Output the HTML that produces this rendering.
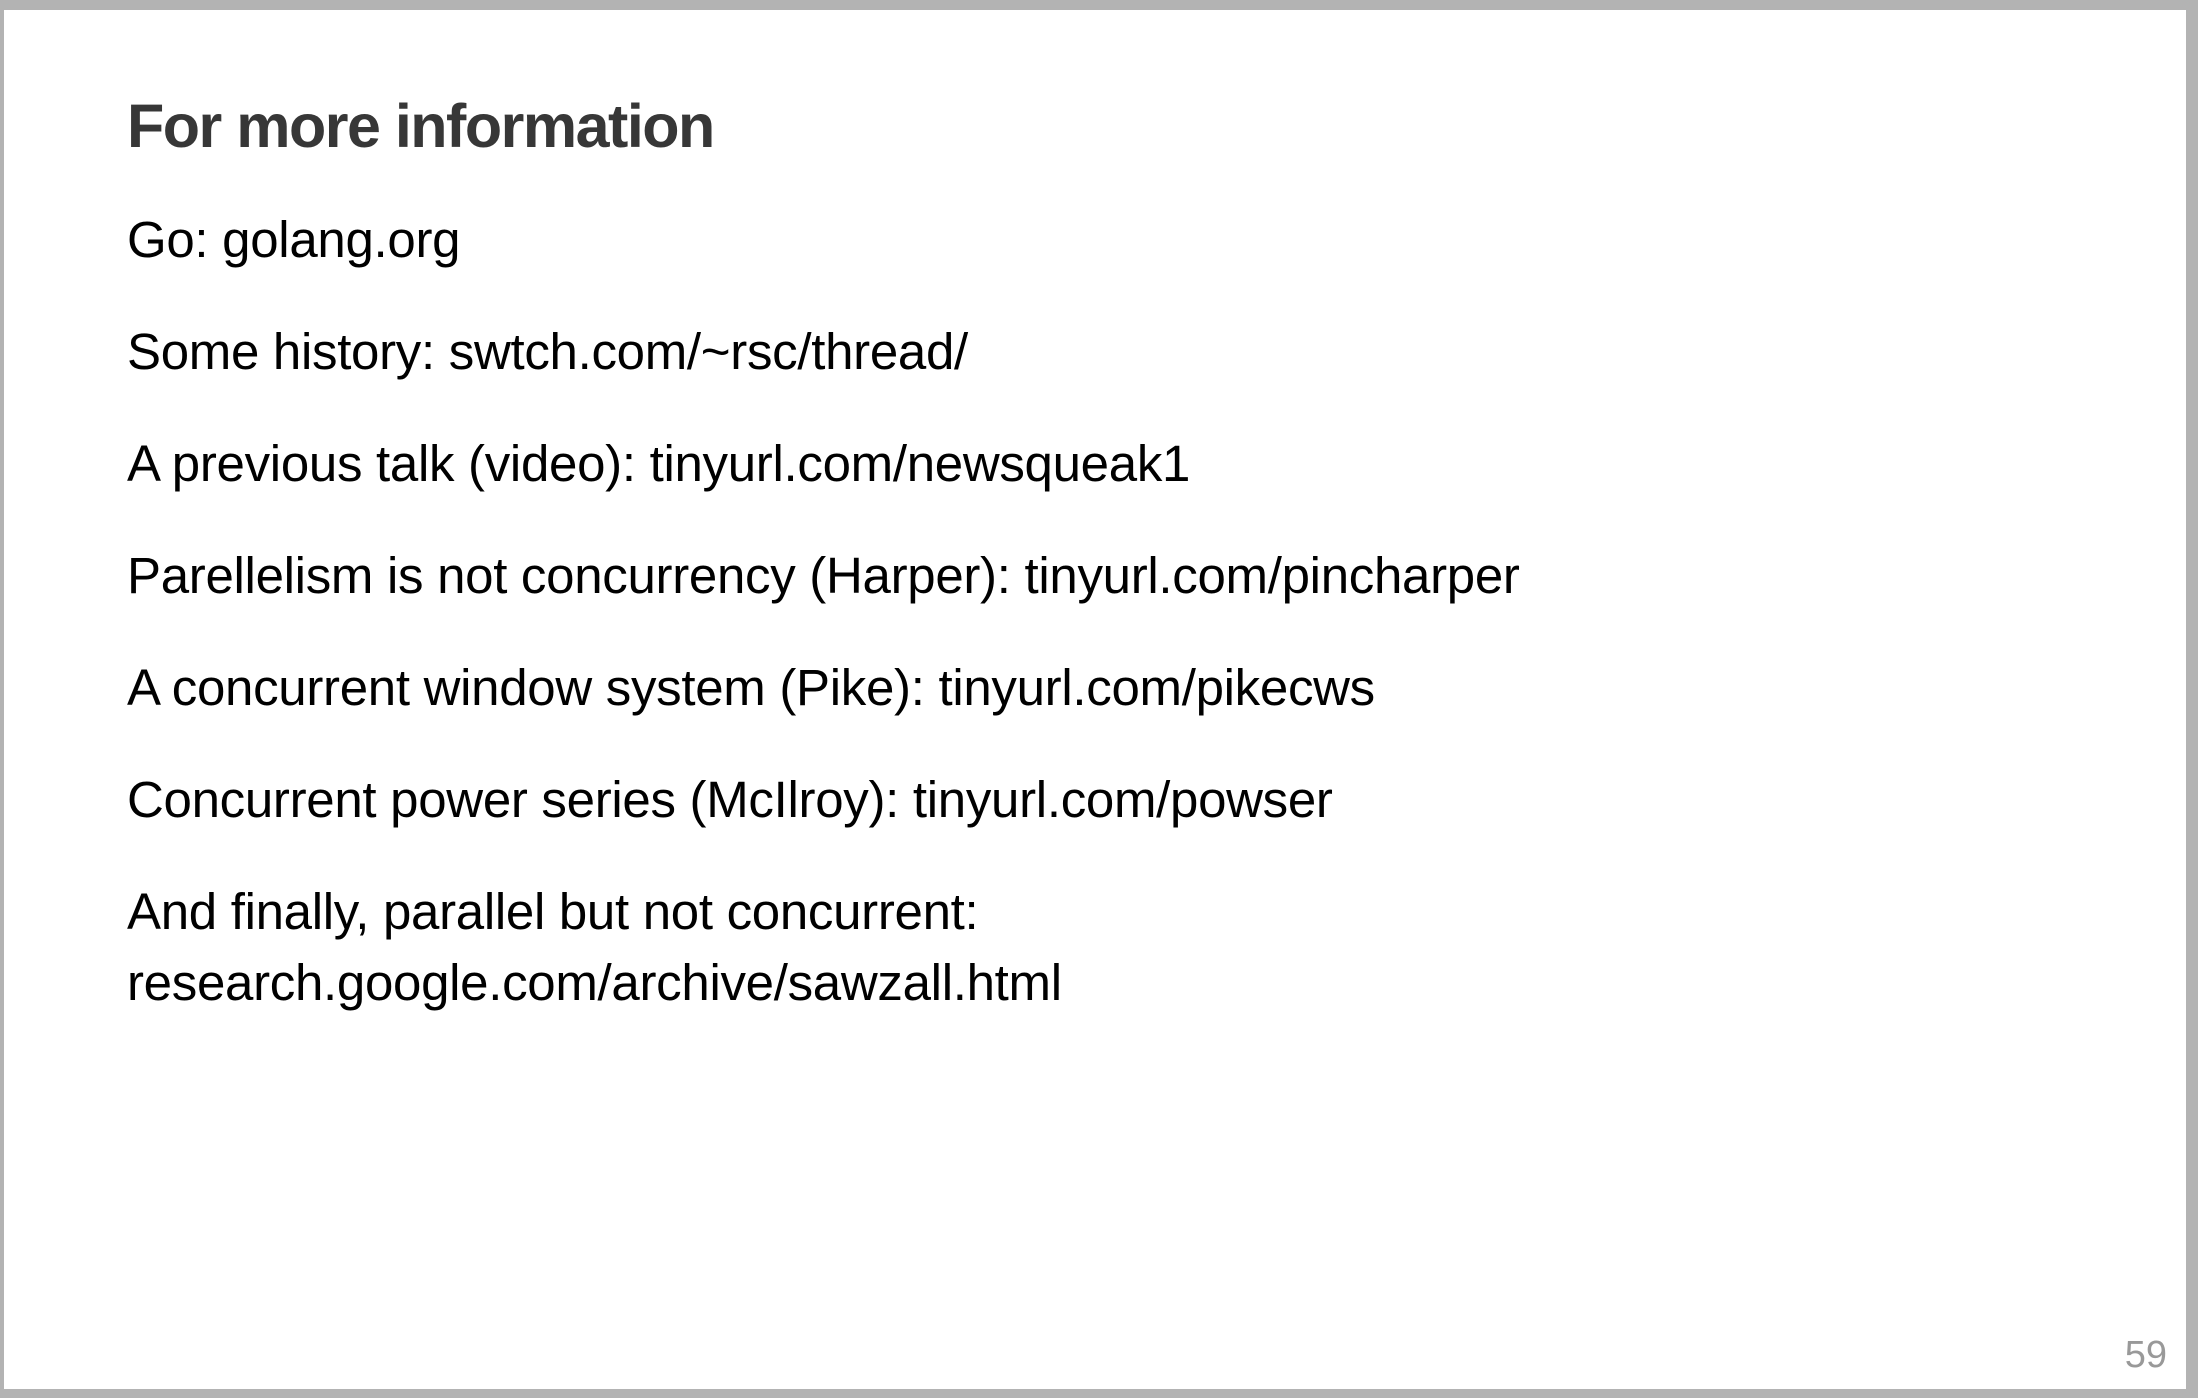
<!DOCTYPE html>
<html><head><meta charset="utf-8"><style>
html,body{margin:0;padding:0;}
body{width:2198px;height:1398px;background:#b3b3b3;position:relative;overflow:hidden;font-family:"Liberation Sans",sans-serif;}
.slide{position:absolute;left:4px;top:10px;width:2182px;height:1379px;background:#fff;}
.t{position:absolute;left:123px;white-space:nowrap;font-size:51px;line-height:51px;color:#000;letter-spacing:-0.3px;}
h1{position:absolute;left:123px;top:86px;margin:0;font-size:61px;line-height:61px;font-weight:bold;color:#373737;letter-spacing:-1.5px;white-space:nowrap;}
.pn{position:absolute;right:19px;top:1326px;font-size:38px;line-height:38px;color:#999;}
</style></head><body>
<div class="slide">
<h1>For more information</h1>
<div class="t" style="top:204px">Go: golang.org</div>
<div class="t" style="top:316px">Some history: swtch.com/~rsc/thread/</div>
<div class="t" style="top:428px">A previous talk (video): tinyurl.com/newsqueak1</div>
<div class="t" style="top:540px">Parellelism is not concurrency (Harper): tinyurl.com/pincharper</div>
<div class="t" style="top:652px">A concurrent window system (Pike): tinyurl.com/pikecws</div>
<div class="t" style="top:764px">Concurrent power series (McIlroy): tinyurl.com/powser</div>
<div class="t" style="top:876px">And finally, parallel but not concurrent:</div>
<div class="t" style="top:947px">research.google.com/archive/sawzall.html</div>
<div class="pn">59</div>
</div>
</body></html>
